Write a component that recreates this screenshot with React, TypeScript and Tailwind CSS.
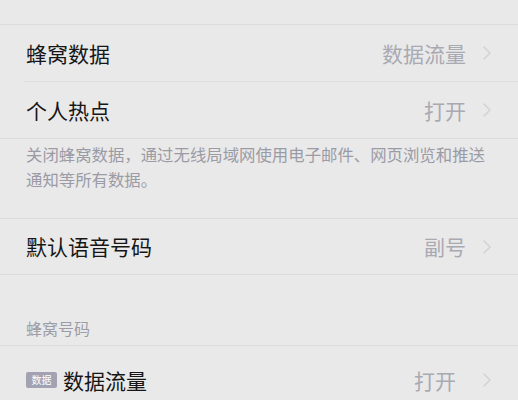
const font = { fontFamily: '"Noto Sans CJK SC", "Noto Sans", sans-serif' };

function Chevron() {
  return (
    <svg width="10" height="16" viewBox="0 0 10 16" className="shrink-0">
      <path d="M2 2 L8 8 L2 14" fill="none" stroke="#d3d3d8" strokeWidth="1.6" strokeLinecap="round" strokeLinejoin="round" />
    </svg>
  );
}

function Row({ label, value, height, badge, gap = "gap-[16px]" }: { label: string; value: string; height: string; badge?: boolean; gap?: string }) {
  return (
    <div className={`flex items-center justify-between pl-[26px] pr-[26px] ${height}`}>
      <div className="flex items-center gap-[6px]">
        {badge && (
          <span className="flex h-[16px] w-[31px] items-center justify-center rounded-[2px] bg-[#a2a2b3] text-[10px] leading-none text-white">
            数据
          </span>
        )}
        <span className="text-[21px] leading-none text-[#161616]">{label}</span>
      </div>
      <div className={`flex items-center ${gap}`}>
        <span className="text-[21px] leading-none text-[#a9a9b3]">{value}</span>
        <Chevron />
      </div>
    </div>
  );
}

export default function App() {
  return (
    <div className="h-[400px] w-[518px] overflow-hidden bg-[#e9e9e9]" style={font}>
      <div className="h-[25px] border-b border-[#dcdcdc]" />
      <Row label="蜂窝数据" value="数据流量" height="h-[56px]" />
      <div className="ml-[24px] border-b border-[#dedede]" />
      <Row label="个人热点" value="打开" height="h-[56px]" />
      <div className="border-b border-[#dcdcdc]" />
      <div className="h-[79px] px-[26px] pt-[3px] text-[16.4px] leading-[25px] text-[#9b9ba6]">
        关闭蜂窝数据，通过无线局域网使用电子邮件、网页浏览和推送通知等所有数据。
      </div>
      <div className="border-b border-[#dcdcdc]" />
      <Row label="默认语音号码" value="副号" height="h-[55px]" />
      <div className="border-b border-[#dcdcdc]" />
      <div className="flex h-[70px] items-end px-[26px] pb-[9px] text-[16px] leading-none text-[#9d9da8]">
        蜂窝号码
      </div>
      <div className="border-b border-[#dcdcdc]" />
      <Row label="数据流量" value="打开" height="h-[68px]" badge gap="gap-[26px]" />
    </div>
  );
}
